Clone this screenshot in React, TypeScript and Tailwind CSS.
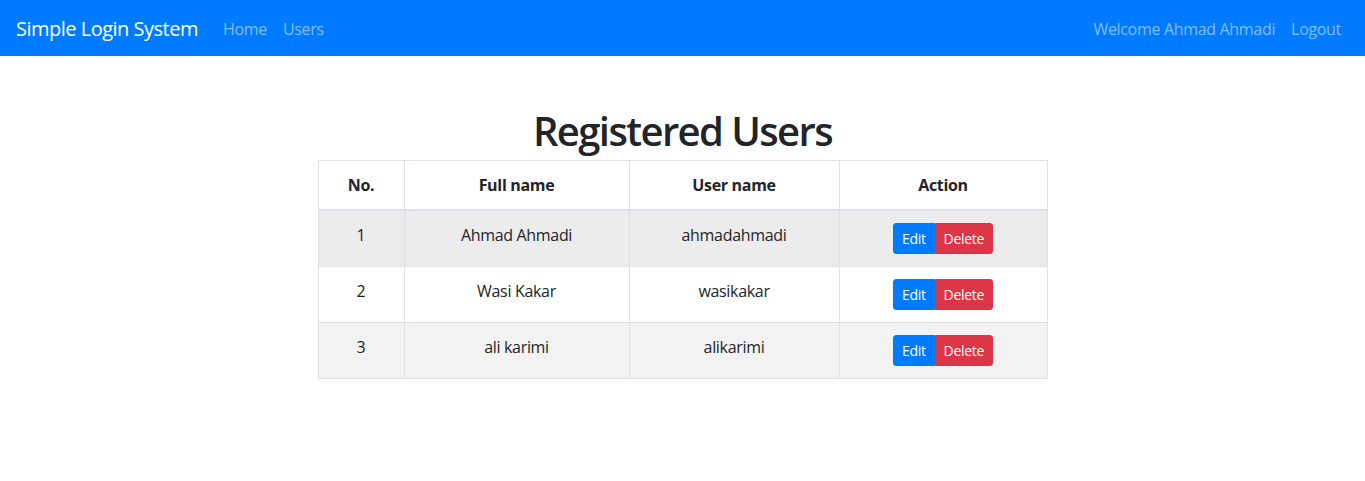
import React from "react";

const users = [
  { id: 1, name: "Ahmad Ahmadi", username: "ahmadahmadi", bg: "bg-[#ececec]" },
  { id: 2, name: "Wasi Kakar", username: "wasikakar", bg: "bg-white" },
  { id: 3, name: "ali karimi", username: "alikarimi", bg: "bg-[#f2f2f2]" },
];

export default function App() {
  return (
    <div className="min-h-screen bg-white text-[#212529] font-['Segoe_UI','Open_Sans',sans-serif] tracking-[-0.02em] text-base">
      {/* Navbar */}
      <nav className="h-[56px] bg-[#007bff] flex items-center px-4 pt-[2px]">
        <a className="text-white text-[20px] leading-[30px] mr-[17px] tracking-[-0.025em]">Simple Login System</a>
        <div className="flex">
          <a className="px-2 text-[#80bdff] leading-6">Home</a>
          <a className="px-2 text-[#80bdff] leading-6">Users</a>
        </div>
        <div className="ml-auto flex">
          <a className="px-2 text-[#80bdff] leading-6">Welcome Ahmad Ahmadi</a>
          <a className="px-2 text-[#80bdff] leading-6">Logout</a>
        </div>
      </nav>

      {/* Content */}
      <div className="mt-12 flex justify-center">
        <div className="w-[730px]">
          <h1 className="text-[40px] leading-[48px] font-semibold tracking-[-0.04em] text-center pt-[3px] mb-[5px]">Registered Users</h1>
          <table className="w-full border-collapse text-center">
            <thead>
              <tr>
                <th className="w-[86px] border border-[#dee2e6] border-b-2 p-3 font-bold leading-6">No.</th>
                <th className="w-[225px] border border-[#dee2e6] border-b-2 p-3 font-bold leading-6">Full name</th>
                <th className="w-[210px] border border-[#dee2e6] border-b-2 p-3 font-bold leading-6">User name</th>
                <th className="border border-[#dee2e6] border-b-2 p-3 font-bold leading-6">Action</th>
              </tr>
            </thead>
            <tbody>
              {users.map((u) => (
                <tr key={u.id} className={u.bg}>
                  <td className="border border-[#dee2e6] p-3 align-top leading-6">{u.id}</td>
                  <td className="border border-[#dee2e6] p-3 align-top leading-6">{u.name}</td>
                  <td className="border border-[#dee2e6] p-3 align-top leading-6">{u.username}</td>
                  <td className="border border-[#dee2e6] p-3 align-top">
                    <div className="inline-flex">
                      <button className="bg-[#007bff] text-white text-sm leading-[21px] px-2 py-1 border border-[#007bff] rounded-l-[3px]">Edit</button>
                      <button className="bg-[#dc3545] text-white text-sm leading-[21px] px-2 py-1 border border-[#dc3545] rounded-r-[3px]">Delete</button>
                    </div>
                  </td>
                </tr>
              ))}
            </tbody>
          </table>
        </div>
      </div>
    </div>
  );
}
